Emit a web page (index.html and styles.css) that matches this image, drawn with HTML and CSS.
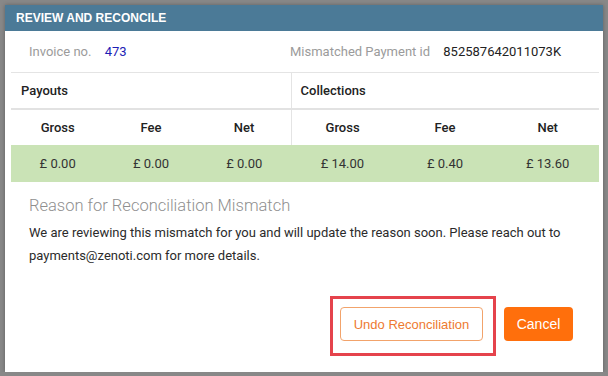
FILE: index.html
```html
<!DOCTYPE html>
<html>
<head>
  <title>Review and Reconcile</title>
  <link rel="stylesheet" href="styles.css">
</head>
<body>
  <div class="modal">
    <div class="modal-header">REVIEW AND RECONCILE</div>

    <div class="info-row">
      <div class="info-item">
        <span class="info-label">Invoice no.</span>
        <span class="info-link">473</span>
      </div>
      <div class="info-item">
        <span class="info-label">Mismatched Payment id</span>
        <span class="info-value">852587642011073K</span>
      </div>
    </div>

    <div class="table-wrap">
      <table class="amounts">
        <colgroup>
          <col class="col-l">
          <col class="col-l">
          <col class="col-l">
          <col class="col-r">
          <col class="col-r">
          <col class="col-r">
        </colgroup>
        <tr class="section-row">
          <td colspan="3" class="section-left">Payouts</td>
          <td colspan="3" class="section-right">Collections</td>
        </tr>
        <tr class="head-row">
          <th>Gross</th>
          <th>Fee</th>
          <th class="split">Net</th>
          <th>Gross</th>
          <th>Fee</th>
          <th>Net</th>
        </tr>
        <tr class="value-row">
          <td>£ 0.00</td>
          <td>£ 0.00</td>
          <td>£ 0.00</td>
          <td>£ 14.00</td>
          <td>£ 0.40</td>
          <td>£ 13.60</td>
        </tr>
      </table>
    </div>

    <div class="reason">
      <h3>Reason for Reconciliation Mismatch</h3>
      <p>We are reviewing this mismatch for you and will update the reason soon. Please reach out to payments@zenoti.com for more details.</p>
    </div>

    <div class="modal-footer">
      <span class="highlight">
        <button class="undo-button" type="button">Undo Reconciliation</button>
      </span>
      <button class="cancel-button" type="button">Cancel</button>
    </div>
  </div>
</body>
</html>
```

FILE: styles.css
```css
body {
  background-color: #888888;
  margin: 0;
  font-family: Roboto, "Liberation Sans", sans-serif;
  color: #333333;
}

.modal {
  margin: 5px 0 0 5px;
  width: 598px;
  height: 367px;
  background-color: #ffffff;
  display: flex;
  flex-direction: column;
  box-shadow: 0px 0px 4px rgba(0, 0, 0, 0.3);
}

.modal-header {
  height: 26px;
  line-height: 26px;
  background-color: #4b7a97;
  color: #ffffff;
  font-family: "Liberation Sans", Arial, sans-serif;
  font-size: 12px;
  font-weight: bold;
  padding-left: 11px;
}

.info-row {
  display: flex;
  height: 41px;
  align-items: center;
  padding-left: 24px;
  font-size: 13px;
  white-space: nowrap;
}

.info-item {
  width: 261px;
  flex-shrink: 0;
}

.info-label {
  color: #9b9b9b;
  margin-right: 10px;
}

.info-link {
  color: #1d1db5;
}

.info-value {
  color: #222222;
}

.table-wrap {
  padding: 0 4px 0 6px;
}

.amounts {
  width: 588px;
  border-collapse: collapse;
  font-size: 13px;
  table-layout: fixed;
}

.col-l {
  width: 93.33px;
}

.col-r {
  width: 102.67px;
}

.amounts td,
.amounts th {
  padding: 0;
}

.section-row td {
  height: 35px;
  border-top: 1px solid #e4e4e4;
  border-bottom: 2px solid #e2e2e2;
  font-weight: 500;
  color: #222222;
}

.amounts .section-left {
  padding-left: 10px;
  border-right: 1px solid #e4e4e4;
}

.amounts .section-right {
  padding-left: 9px;
}

.head-row th {
  height: 35px;
  font-weight: 500;
  color: #222222;
}

.split {
  border-right: 1px solid #e4e4e4;
}

.value-row td {
  height: 37px;
  background-color: #cae3b6;
  text-align: center;
  color: #333333;
}

.reason {
  padding: 0 24px;
}

.reason h3 {
  font-size: 16.5px;
  font-weight: 300;
  color: #8f8f8f;
  margin: 14px 0 6px 0;
}

.reason p {
  font-size: 13px;
  line-height: 23px;
  margin: 0;
  color: #2b2b2b;
}

.modal-footer {
  margin-top: auto;
  padding: 0 30px 31px 0;
  display: flex;
  justify-content: flex-end;
  gap: 21px;
}

.highlight {
  position: relative;
}

/* red box drawn over the screenshot */
.highlight::after {
  content: "";
  position: absolute;
  top: -11px;
  left: -10px;
  right: -13px;
  bottom: -15px;
  border: 3px solid #e5434c;
}

.undo-button {
  height: 34px;
  width: 143px;
  background-color: #ffffff;
  border: 1px solid #f2a36b;
  border-radius: 4px;
  color: #ee7a30;
  font-family: "Liberation Sans", Arial, sans-serif;
  font-size: 13px;
  cursor: pointer;
}

.cancel-button {
  height: 34px;
  width: 69px;
  background-color: #ff6f0c;
  border: none;
  border-radius: 4px;
  color: #ffffff;
  font-family: "Liberation Sans", Arial, sans-serif;
  font-size: 14px;
  cursor: pointer;
}
```
